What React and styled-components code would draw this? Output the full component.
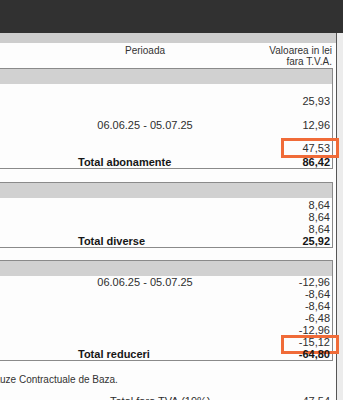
import React from "react";
import styled, { createGlobalStyle } from "styled-components";

const Global = createGlobalStyle`
  html, body { margin: 0; padding: 0; background: #ececec; }
  body { font-family: "Liberation Sans", Arial, sans-serif; }
  #root { width: 343px; height: 400px; overflow: hidden; }
`;

const Screen = styled.div`
  width: 343px;
  height: 400px;
  overflow: hidden;
  display: flex;
  flex-direction: column;
  background: #ececec;
`;

const TopBar = styled.div`
  height: 33px;
  flex: none;
  background: #313131;
`;

const Sheet = styled.div`
  width: 337px;
  flex: 1;
  box-sizing: border-box;
  background: #fdfdfd;
  border-right: 1px solid #555;
  display: flex;
  flex-direction: column;
  color: #2a2a2a;
`;

const Stripe = styled.div`
  height: 10px;
  flex: none;
  background: #cdcdcd;
`;

const HeaderRow = styled.div`
  height: 25px;
  flex: none;
  display: grid;
  grid-template-columns: 78px 134px 1fr;
  padding-right: 4px;
  font-size: 10px;
  line-height: 11px;
  color: #333;
  box-sizing: border-box;
  padding-top: 2px;
`;

const HeadPeriod = styled.div`
  grid-column: 2;
  text-align: center;
`;

const HeadValue = styled.div`
  grid-column: 3;
  text-align: right;
`;

const Box = styled.div`
  margin: ${(p) => p.$mt}px 3px 0 -1px;
  border: 1px solid #8a8a8a;
  flex: none;
`;

const BoxHead = styled.div`
  height: 15px;
  background: #d1d1d1;
`;

const BoxBody = styled.div`
  padding-top: ${(p) => p.$pt || 0}px;
  display: flex;
  flex-direction: column;
`;

const Row = styled.div`
  position: relative;
  height: ${(p) => p.$h || 12}px;
  display: grid;
  grid-template-columns: 78px 134px 1fr;
  align-items: start;
  padding-right: 2px;
  font-size: 11px;
  line-height: 12px;
  font-weight: ${(p) => (p.$bold ? 700 : 400)};
  color: ${(p) => (p.$bold ? "#161616" : "#2e2e2e")};
`;

const Period = styled.div`
  grid-column: 2;
  text-align: center;
  white-space: nowrap;
`;

const Label = styled.div`
  grid-column: 2;
  text-align: left;
  white-space: nowrap;
`;

const Value = styled.div`
  grid-column: 3;
  text-align: right;
`;

const Highlight = styled.div`
  position: absolute;
  right: -7px;
  width: 58px;
  top: ${(p) => p.$top}px;
  height: ${(p) => p.$h}px;
  box-sizing: border-box;
  border: 3px solid #f06b38;
  pointer-events: none;
`;

const Note = styled.div`
  margin: 13px 0 0 -15px;
  font-size: 10px;
  line-height: 12px;
  color: #333;
  white-space: nowrap;
`;

const Summary = styled.div`
  margin-top: 9px;
  display: grid;
  grid-template-columns: 110px 1fr auto;
  padding-right: 6px;
  font-size: 11px;
  line-height: 12px;
  color: #2e2e2e;
`;

const SumLabel = styled.div`
  grid-column: 2;
`;

const SumValue = styled.div`
  grid-column: 3;
  text-align: right;
`;

const PERIOD = "06.06.25 - 05.07.25";

export default function App() {
  return (
    <>
      <Global />
      <Screen>
        <TopBar />
        <Sheet>
          <Stripe />
          <HeaderRow>
            <HeadPeriod>Perioada</HeadPeriod>
            <HeadValue>
              Valoarea in lei
              <br />
              fara T.V.A.
            </HeadValue>
          </HeaderRow>

          <Box $mt={0}>
            <BoxHead />
            <BoxBody $pt={11}>
              <Row $h={24}>
                <Value>25,93</Value>
              </Row>
              <Row $h={23}>
                <Period>{PERIOD}</Period>
                <Value>12,96</Value>
              </Row>
              <Row $h={14}>
                <Value>47,53</Value>
                <Highlight $top={-4} $h={20} />
              </Row>
              <Row $bold>
                <Label>Total abonamente</Label>
                <Value>86,42</Value>
              </Row>
            </BoxBody>
          </Box>

          <Box $mt={13}>
            <BoxHead />
            <BoxBody $pt={1}>
              <Row>
                <Value>8,64</Value>
              </Row>
              <Row>
                <Value>8,64</Value>
              </Row>
              <Row>
                <Value>8,64</Value>
              </Row>
              <Row $bold>
                <Label>Total diverse</Label>
                <Value>25,92</Value>
              </Row>
            </BoxBody>
          </Box>

          <Box $mt={12}>
            <BoxHead />
            <BoxBody>
              <Row>
                <Period>{PERIOD}</Period>
                <Value>-12,96</Value>
              </Row>
              <Row>
                <Value>-8,64</Value>
              </Row>
              <Row>
                <Value>-8,64</Value>
              </Row>
              <Row>
                <Value>-6,48</Value>
              </Row>
              <Row>
                <Value>-12,96</Value>
              </Row>
              <Row>
                <Value>-15,12</Value>
                <Highlight $top={-1} $h={19} />
              </Row>
              <Row $bold>
                <Label>Total reduceri</Label>
                <Value>-64,80</Value>
              </Row>
            </BoxBody>
          </Box>

          <Note>Clauze Contractuale de Baza.</Note>
          <Summary>
            <SumLabel>Total fara TVA (19%)</SumLabel>
            <SumValue>47,54</SumValue>
          </Summary>
        </Sheet>
      </Screen>
    </>
  );
}
